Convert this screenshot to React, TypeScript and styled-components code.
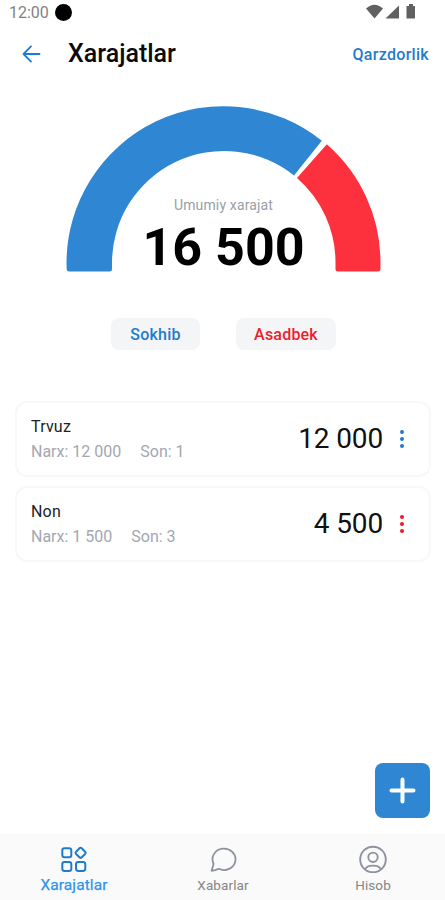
import React from 'react';
import styled, { createGlobalStyle } from 'styled-components';

const BLUE = '#2f86d2';
const LINK = '#1f7ccc';
const RED = '#fd303e';

const GlobalStyle = createGlobalStyle`
  * { box-sizing: border-box; }
  body { margin: 0; background: #fff; font-family: Roboto, "Liberation Sans", sans-serif; }
  button { font-family: inherit; border: 0; margin: 0; padding: 0; background: none; }
  svg { display: block; }
`;

const Screen = styled.div`
  width: 445px;
  height: 900px;
  display: flex;
  flex-direction: column;
  overflow: hidden;
  background: #fff;
`;

const StatusBar = styled.div`
  height: 24px;
  flex: none;
  display: flex;
  align-items: center;
  padding: 0 29px 0 9px;
`;

const Clock = styled.span`
  font-size: 16px;
  line-height: 24px;
  padding-top: 1px;
  color: #828282;
`;

const CameraDot = styled.span`
  width: 17px;
  height: 17px;
  margin-left: 6px;
  border-radius: 50%;
  background: #000;
`;

const StatusIcons = styled.svg`
  margin-left: auto;
`;

const Header = styled.header`
  height: 60px;
  flex: none;
  display: flex;
  align-items: center;
  padding: 0 16px 0 22px;
`;

const Title = styled.h1`
  margin: 0 auto 0 27px;
  font-size: 25px;
  font-weight: 500;
  line-height: 28px;
  color: #0b0b0b;
`;

const HeaderLink = styled.button`
  padding-top: 1px;
  font-size: 16px;
  font-weight: 500;
  letter-spacing: 0.3px;
  color: ${LINK};
`;

const Gauge = styled.section`
  display: grid;
  justify-items: center;
  width: 445px;
  height: 188px;
  margin-top: 16px;
  flex: none;
`;

const GaugeChart = styled.svg`
  grid-area: 1 / 1;
`;

const GaugeText = styled.div`
  grid-area: 1 / 1;
  padding-top: 96px;
  padding-left: 2px;
  text-align: center;
`;

const GaugeLabel = styled.div`
  font-size: 14px;
  line-height: 18px;
  letter-spacing: 0.15px;
  color: #98a0a8;
`;

const GaugeTotal = styled.div`
  margin-top: 4px;
  font-size: 52px;
  font-weight: 700;
  line-height: 60px;
  color: #000;
`;

const People = styled.div`
  display: flex;
  justify-content: center;
  gap: 36px;
  margin-top: 30px;
  padding-left: 2px;
  flex: none;
`;

const Chip = styled.button<{ $color: string; $width: number }>`
  width: ${(p) => p.$width}px;
  height: 32px;
  border-radius: 8px;
  background: #f3f5f7;
  color: ${(p) => p.$color};
  font-size: 16px;
  font-weight: 500;
  letter-spacing: 0.2px;
`;

const List = styled.div`
  display: flex;
  flex-direction: column;
  gap: 9px;
  margin: 51px 14px 0 15px;
`;

const Card = styled.article`
  height: 76px;
  flex: none;
  display: flex;
  align-items: center;
  padding: 0 25px 0 14px;
  border: 2px solid #f8f8f9;
  border-radius: 12px;
  background: #fff;
`;

const Info = styled.div`
  flex: 1;
`;

const Name = styled.div`
  font-size: 16px;
  line-height: 22px;
  letter-spacing: 0.2px;
  color: #222;
`;

const Details = styled.div`
  display: flex;
  gap: 19px;
  margin-top: 3px;
  font-size: 16px;
  line-height: 22px;
  color: #a2a8b0;
`;

const Amount = styled.div`
  font-size: 28px;
  line-height: 32px;
  letter-spacing: -0.15px;
  color: #111;
`;

const MoreButton = styled.button`
  display: flex;
  flex-direction: column;
  gap: 3px;
  margin-left: 17px;
`;

const Dot = styled.span<{ $color: string }>`
  width: 4px;
  height: 4px;
  border-radius: 50%;
  background: ${(p) => p.$color};
`;

const AddButton = styled.button`
  display: grid;
  place-items: center;
  width: 55px;
  height: 55px;
  margin: auto 15px 16px auto;
  border-radius: 8px;
  background: ${BLUE};
  flex: none;
`;

const TabBar = styled.nav`
  display: grid;
  grid-template-columns: 148px 150px 150px;
  height: 66px;
  flex: none;
  background: #fafafb;
`;

const Tab = styled.button<{ $active?: boolean }>`
  display: flex;
  flex-direction: column;
  align-items: center;
  padding-top: 11px;
  color: ${(p) => (p.$active ? '#2f93e8' : '#858585')};
  font-size: ${(p) => (p.$active ? 15.5 : 13.5)}px;
  line-height: 18px;
  letter-spacing: 0.1px;
  -webkit-text-stroke: ${(p) => (p.$active ? '0.25px' : '0')};
`;

const TabLabel = styled.span`
  margin-top: 3px;
`;

const expenses = [
  { name: 'Trvuz', price: '12 000', count: 1, total: '12 000', color: LINK },
  { name: 'Non', price: '1 500', count: 3, total: '4 500', color: '#f01828' },
];

export default function App() {
  return (
    <>
      <GlobalStyle />
      <Screen>
        <StatusBar>
          <Clock>12:00</Clock>
          <CameraDot />
          <StatusIcons width="50" height="16" viewBox="0 0 50 16" fill="#606060">
            <path d="M0 4.5Q8.5-3.2 17 4.5L8.5 14.5Z" />
            <path d="M33 1.5V14.5H19.5Z" />
            <path d="M43 0h4v2h2v12.5h-8.5V2H43Z" />
          </StatusIcons>
        </StatusBar>
        <Header>
          <svg width="19" height="18" viewBox="0 0 19 18" fill="none" stroke={LINK} strokeWidth="1.8" strokeLinecap="round" strokeLinejoin="round">
            <path d="M17.5 9H1.5M9 1.3L1.5 9L9 16.7" />
          </svg>
          <Title>Xarajatlar</Title>
          <HeaderLink>Qarzdorlik</HeaderLink>
        </Header>
        <Gauge>
          <GaugeChart width="445" height="188" viewBox="0 100 445 188">
            <path
              d="M66.5 263A157 157 0 0 1 321.8 140.8L294 175.5A112 112 0 0 0 112 263V269Q112 271.5 109.5 271.5H69.5Q66.8 271.5 66.7 269Z"
              fill={BLUE}
            />
            <path
              d="M326.8 144.3A157 157 0 0 1 380.5 263V269Q380.4 271.5 378 271.5H338Q335.5 271.5 335.5 269V263A112 112 0 0 0 297 178Z"
              fill={RED}
            />
          </GaugeChart>
          <GaugeText>
            <GaugeLabel>Umumiy xarajat</GaugeLabel>
            <GaugeTotal>16 500</GaugeTotal>
          </GaugeText>
        </Gauge>
        <People>
          <Chip $color={LINK} $width={89}>Sokhib</Chip>
          <Chip $color="#ee1d2b" $width={100}>Asadbek</Chip>
        </People>
        <List>
          {expenses.map((item) => (
            <Card key={item.name}>
              <Info>
                <Name>{item.name}</Name>
                <Details>
                  <span>Narx: {item.price}</span>
                  <span>Son: {item.count}</span>
                </Details>
              </Info>
              <Amount>{item.total}</Amount>
              <MoreButton aria-label={item.name}>
                <Dot $color={item.color} />
                <Dot $color={item.color} />
                <Dot $color={item.color} />
              </MoreButton>
            </Card>
          ))}
        </List>
        <AddButton aria-label="+">
          <svg width="27" height="27" viewBox="0 0 27 27" stroke="#fff" strokeWidth="4" strokeLinecap="round">
            <path d="M13.5 2.5V24.5M2.5 13.5H24.5" />
          </svg>
        </AddButton>
        <TabBar>
          <Tab $active>
            <svg width="28" height="28" viewBox="0 0 28 28" fill="none" stroke="#1f7ccc" strokeWidth="2" strokeLinejoin="round">
              <rect x="2.3" y="3.2" width="9" height="9" rx="2.2" />
              <rect x="2.3" y="17" width="9" height="9" rx="2.2" />
              <rect x="16" y="17" width="9.3" height="9" rx="2.4" />
              <rect x="16.6" y="3.8" width="8" height="8" rx="1.6" transform="rotate(45 20.6 7.8)" />
            </svg>
            <TabLabel>Xarajatlar</TabLabel>
          </Tab>
          <Tab>
            <svg width="28" height="28" viewBox="0 0 28 28" fill="none" stroke="#8c939f" strokeWidth="1.8" strokeLinejoin="round" strokeLinecap="round">
              <path d="M2.6 25.8L4.6 18.8A11.5 10.7 0 1 1 9.8 23.8Q6.5 25.6 2.6 25.8Z" />
            </svg>
            <TabLabel>Xabarlar</TabLabel>
          </Tab>
          <Tab>
            <svg width="28" height="28" viewBox="0 0 28 28" fill="none" stroke="#8c939f" strokeWidth="1.9" strokeLinecap="round">
              <circle cx="14" cy="14.5" r="12.8" />
              <circle cx="14" cy="12.3" r="4.7" />
              <path d="M6.3 24.2Q7.5 20.6 14 20.6T21.7 24.2" />
            </svg>
            <TabLabel>Hisob</TabLabel>
          </Tab>
        </TabBar>
      </Screen>
    </>
  );
}
